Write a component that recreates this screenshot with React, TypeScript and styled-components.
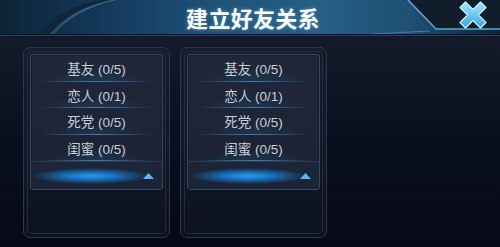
import React from "react";
import styled, { createGlobalStyle } from "styled-components";

const Global = createGlobalStyle`
  html, body { margin: 0; padding: 0; background: #0a0e1b; }
  body { font-family: "Liberation Sans", "Noto Sans CJK SC", sans-serif; }
`;

const Page = styled.div`
  width: 500px;
  height: 247px;
  overflow: hidden;
  display: flex;
  flex-direction: column;
  background: linear-gradient(180deg, #1a1e2e 0px, #141a2a 40px, #0a0f1f 140px, #060a17 247px);
`;

const Header = styled.header`
  position: relative;
  height: 34px;
  flex: none;
  display: grid;
  grid-template-columns: 1fr auto 1fr;
  align-items: center;
  background: linear-gradient(90deg, #0d2438 0%, #14385a 20%, #1f5479 45%, #265f86 65%, #1f4f72 82%, #102236 100%);
  border-bottom: 1px solid #0a1420;
  box-shadow: 0 1px 0 #22415c;
`;

const HeaderArt = styled.svg`
  position: absolute;
  inset: 0;
  width: 100%;
  height: 100%;
  pointer-events: none;
`;

const Title = styled.h1`
  position: relative;
  grid-column: 2;
  margin: 0 0 0 6px;
  font-family: "Noto Sans CJK SC", sans-serif;
  font-size: 22px;
  font-weight: 700;
  letter-spacing: 0.3px;
  color: #ffffff;
  text-shadow: 0 0 4px rgba(120, 200, 255, 0.5);
  line-height: 34px;
`;

const CloseSlot = styled.div`
  position: relative;
  grid-column: 3;
  display: flex;
  justify-content: flex-end;
  padding-right: 11px;
  margin-top: -5px;
`;

const CloseButton = styled.button`
  width: 32px;
  height: 32px;
  padding: 0;
  border: 0;
  background: none;
  display: flex;
  align-items: center;
  justify-content: center;
  cursor: pointer;
`;

const Body = styled.main`
  flex: 1;
  display: flex;
  gap: 10px;
  padding: 12px 0 0 23px;
`;

const Panel = styled.section`
  width: 147px;
  height: 191px;
  box-sizing: border-box;
  border: 1px solid #2c3648;
  border-radius: 7px;
  padding: 3px;
  background: linear-gradient(180deg, #171d2d 0%, #111726 60%, #0d1222 100%);
`;

const PanelInner = styled.div`
  height: 100%;
  box-sizing: border-box;
  border: 1px solid #222c3d;
  border-radius: 5px;
  padding: 2px 2px;
`;

const List = styled.ul`
  list-style: none;
  margin: 0;
  padding: 0;
  border: 1px solid #3a475b;
  border-radius: 3px;
  background: linear-gradient(180deg, #1f2738 0%, #1a2233 100%);
  box-shadow: inset 0 0 0 1px #161c2a;
  overflow: hidden;
`;

const Row = styled.li`
  position: relative;
  height: 26.5px;
  display: flex;
  align-items: center;
  justify-content: center;
  font-size: 13.5px;
  color: #c5cedb;
  background: radial-gradient(ellipse 60% 70% at 50% 100%, rgba(40, 90, 140, 0.3), rgba(0, 0, 0, 0) 70%);
  &::after {
    content: "";
    position: absolute;
    left: 8px;
    right: 8px;
    bottom: 0;
    height: 1px;
    background: linear-gradient(90deg, rgba(60, 110, 160, 0) 0%, #3f7bb0 50%, rgba(60, 110, 160, 0) 100%);
  }
`;

const GlowRow = styled.li`
  position: relative;
  height: 27px;
  display: flex;
  align-items: center;
  justify-content: flex-end;
  padding-right: 6px;
  background:
    radial-gradient(ellipse 45% 30% at 46% 52%, #2c9cf0 0%, #1872c0 40%, rgba(20, 80, 150, 0) 100%),
    linear-gradient(180deg, #1c2638 0%, #1a2436 100%);
  border-top: 1px solid #2d3a4e;
`;

const Caret = styled.svg`
  width: 11px;
  height: 6px;
  margin-right: 2px;
`;

const rows = ["基友 (0/5)", "恋人 (0/1)", "死党 (0/5)", "闺蜜 (0/5)"];

function RelationPanel() {
  return (
    <Panel>
      <PanelInner>
        <List>
          {rows.map((r) => (
            <Row key={r}>{r}</Row>
          ))}
          <GlowRow>
            <Caret viewBox="0 0 11 6">
              <polygon points="0,6 5.5,0 11,6" fill="#5cb8f2" />
            </Caret>
          </GlowRow>
        </List>
      </PanelInner>
    </Panel>
  );
}

export default function App() {
  return (
    <>
      <Global />
      <Page>
        <Header>
          <HeaderArt viewBox="0 0 500 34" preserveAspectRatio="none">
            <defs>
              <linearGradient id="arcG" x1="0" y1="1" x2="1" y2="0">
                <stop offset="0" stopColor="#2a5678" />
                <stop offset="1" stopColor="#4e86ad" />
              </linearGradient>
            </defs>
            <path d="M38 34 Q62 6 102 0 L112 0 Q72 8 50 34 Z" fill="#12263a" />
            <path d="M50 34 Q72 8 112 0 L116 0 Q76 9 54 34 Z" fill="url(#arcG)" opacity="0.7" />
            <path d="M408 0 L436 29 L500 29 L500 0 Z" fill="#121d2c" />
            <path d="M408 0 L436 29 L500 29" fill="none" stroke="#5aa6d6" strokeWidth="1.6" />
            <path d="M400 0 L428 30" fill="none" stroke="#2d5878" strokeWidth="1" />
            <path d="M372 34 L430 31" fill="none" stroke="#3f7fae" strokeWidth="1" />
          </HeaderArt>
          <Title>建立好友关系</Title>
          <CloseSlot>
            <CloseButton aria-label="关闭">
              <svg width="32" height="32" viewBox="0 0 32 32">
                <defs>
                  <linearGradient id="xg" x1="0" y1="0" x2="0" y2="1">
                    <stop offset="0" stopColor="#9ee6ff" />
                    <stop offset="1" stopColor="#3aa6e0" />
                  </linearGradient>
                </defs>
                <path
                  d="M3 8.5 L8.5 3 L16 10.5 L23.5 3 L29 8.5 L21.5 16 L29 23.5 L23.5 29 L16 21.5 L8.5 29 L3 23.5 L10.5 16 Z"
                  fill="url(#xg)"
                  stroke="#c8f3ff"
                  strokeWidth="1.2"
                  strokeLinejoin="round"
                />
              </svg>
            </CloseButton>
          </CloseSlot>
        </Header>
        <Body>
          <RelationPanel />
          <RelationPanel />
        </Body>
      </Page>
    </>
  );
}
